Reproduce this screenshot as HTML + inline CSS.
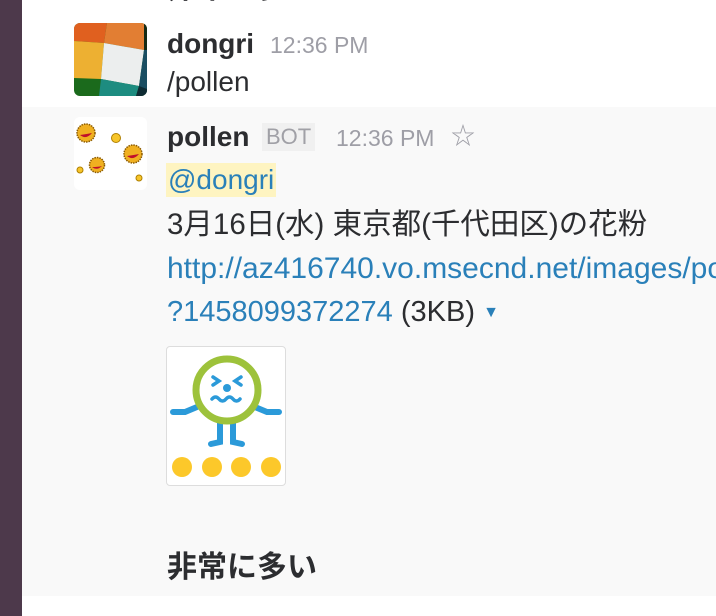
<!DOCTYPE html>
<html><head><meta charset="utf-8"><style>
*{margin:0;padding:0}
body{width:716px;height:616px;overflow:hidden;background:#fff;position:relative;font-family:"Liberation Sans","Noto Sans CJK JP",sans-serif;color:#2c2d30}
.a{position:absolute;white-space:nowrap}
.t{font-size:28px;line-height:36px}
.b{font-weight:bold;font-size:28px;line-height:36px}
.ts{color:#9e9ea6;font-size:23px;line-height:36px}
.lk{color:#2a80b9}
</style></head><body>
<div class="a" style="left:0;top:0;width:22px;height:616px;background:#4d394b"></div>
<div class="a" style="left:22px;top:107px;width:694px;height:489px;background:#f9f9f9"></div>
<div class="a b" style="left:167px;top:-29px;font-size:30px">非常に多い</div>

<svg class="a" style="left:74px;top:23px" width="73" height="73" viewBox="0 0 73 73">
<defs><clipPath id="c"><rect width="73" height="73" rx="6"/></clipPath></defs>
<g clip-path="url(#c)">
<rect width="73" height="73" fill="#1b6a1c"/>
<polygon points="0,0 33,0 30,20 0,18" fill="#e0601f"/>
<polygon points="33,0 73,0 70,27 30,20" fill="#e27e33"/>
<polygon points="0,18 30,20 27,56 0,55" fill="#edb032"/>
<polygon points="30,20 70,27 65,63 27,56" fill="#eceeee"/>
<polygon points="70,27 73,27 73,73 65,63" fill="#1a4e62"/>
<polygon points="70,0 73,0 73,27 70,27" fill="#152a15"/>
<polygon points="27,56 65,63 62,73 25,73" fill="#1d8c80"/>
<polygon points="65,63 73,66 73,73 62,73" fill="#0e2b33"/>
</g></svg>
<div class="a b" style="left:167px;top:26px">dongri</div>
<div class="a ts" style="left:270px;top:27px">12:36 PM</div>
<div class="a t" style="left:167px;top:64px">/pollen</div>

<svg class="a" style="left:74px;top:117px" width="73" height="73" viewBox="0 0 73 73">
<rect width="73" height="73" rx="6" fill="#fff"/>
<g stroke="#8a5a00" stroke-width="1.5" stroke-dasharray="1.5 1" fill="#f0b020">
<circle cx="12" cy="16" r="9"/><circle cx="59" cy="37" r="9"/><circle cx="23" cy="48" r="7.5"/>
</g>
<g fill="#f7c52a" stroke="#b08000" stroke-width="1"><circle cx="42" cy="21" r="4.5"/><circle cx="6" cy="53" r="3"/><circle cx="65" cy="61" r="3"/></g>
<g fill="#c0102a"><path d="M6 18 q6 5 12 -2 q-5 1 -12 2z"/><path d="M53 39 q6 5 12 -2 q-5 1 -12 2z"/><path d="M18 50 q5 4 10 -1 q-4 1 -10 1z"/></g>
</svg>
<div class="a b" style="left:167px;top:119px">pollen</div>
<div class="a" style="left:262px;top:123px;background:#f0f0f0;color:#a0a0a6;font-size:22px;line-height:28px;padding:0 4px">BOT</div>
<div class="a ts" style="left:336px;top:120px">12:36 PM</div>
<div class="a" style="left:451px;top:122px;color:#9e9ea6;font-size:24px;line-height:30px">☆</div>
<div class="a t lk" style="left:166px;top:163px;background:#fef4c1;padding:0 2px;line-height:34px">@dongri</div>
<div class="a t" style="left:167px;top:207px;font-size:29.5px">3月16日(水) 東京都(千代田区)の花粉</div>
<div class="a" style="left:167px;top:251px;width:549px;overflow:hidden"><div class="t lk" style="font-size:30px;white-space:nowrap">http://az416740.vo.msecnd.net/images/pollen</div></div>
<div class="a t" style="left:167px;top:294px;font-size:29px"><span class="lk">?1458099372274</span> (3KB) <span class="lk" style="font-size:16px;vertical-align:4px">▼</span></div>

<div class="a" style="left:166px;top:346px;width:118px;height:138px;background:#fff;border:1px solid #ddd;border-radius:4px"></div>
<svg class="a" style="left:167px;top:347px" width="118" height="138" viewBox="0 0 118 138">
<g stroke="#2b9ad9" stroke-width="6" stroke-linecap="round" fill="none">
<path d="M30 60 L18 65 L6 65"/><path d="M88 60 L100 65 L112 65"/>
<path d="M53 76 L53 95 L44 97"/><path d="M66 76 L66 95 L75 97"/>
</g>
<circle cx="60" cy="43" r="31" fill="#fff" stroke="#9dc23b" stroke-width="7"/>
<g stroke="#2b9ad9" stroke-width="3.5" stroke-linecap="round" fill="none">
<path d="M46 30 l6 4 l-6 4"/><path d="M74 30 l-6 4 l6 4"/>
<path d="M45 52 q3.5 -4 7 0 q3.5 4 7 0 q3.5 -4 7 0 q3.5 4 7 0"/>
</g>
<circle cx="60" cy="41" r="4" fill="#2b9ad9"/>
<g fill="#fcc82a"><circle cx="15" cy="120" r="10"/><circle cx="45" cy="120" r="10"/><circle cx="74" cy="120" r="10"/><circle cx="104" cy="120" r="10"/></g>
</svg>
<div class="a b" style="left:167px;top:550px;font-size:30px">非常に多い</div>
</body></html>
